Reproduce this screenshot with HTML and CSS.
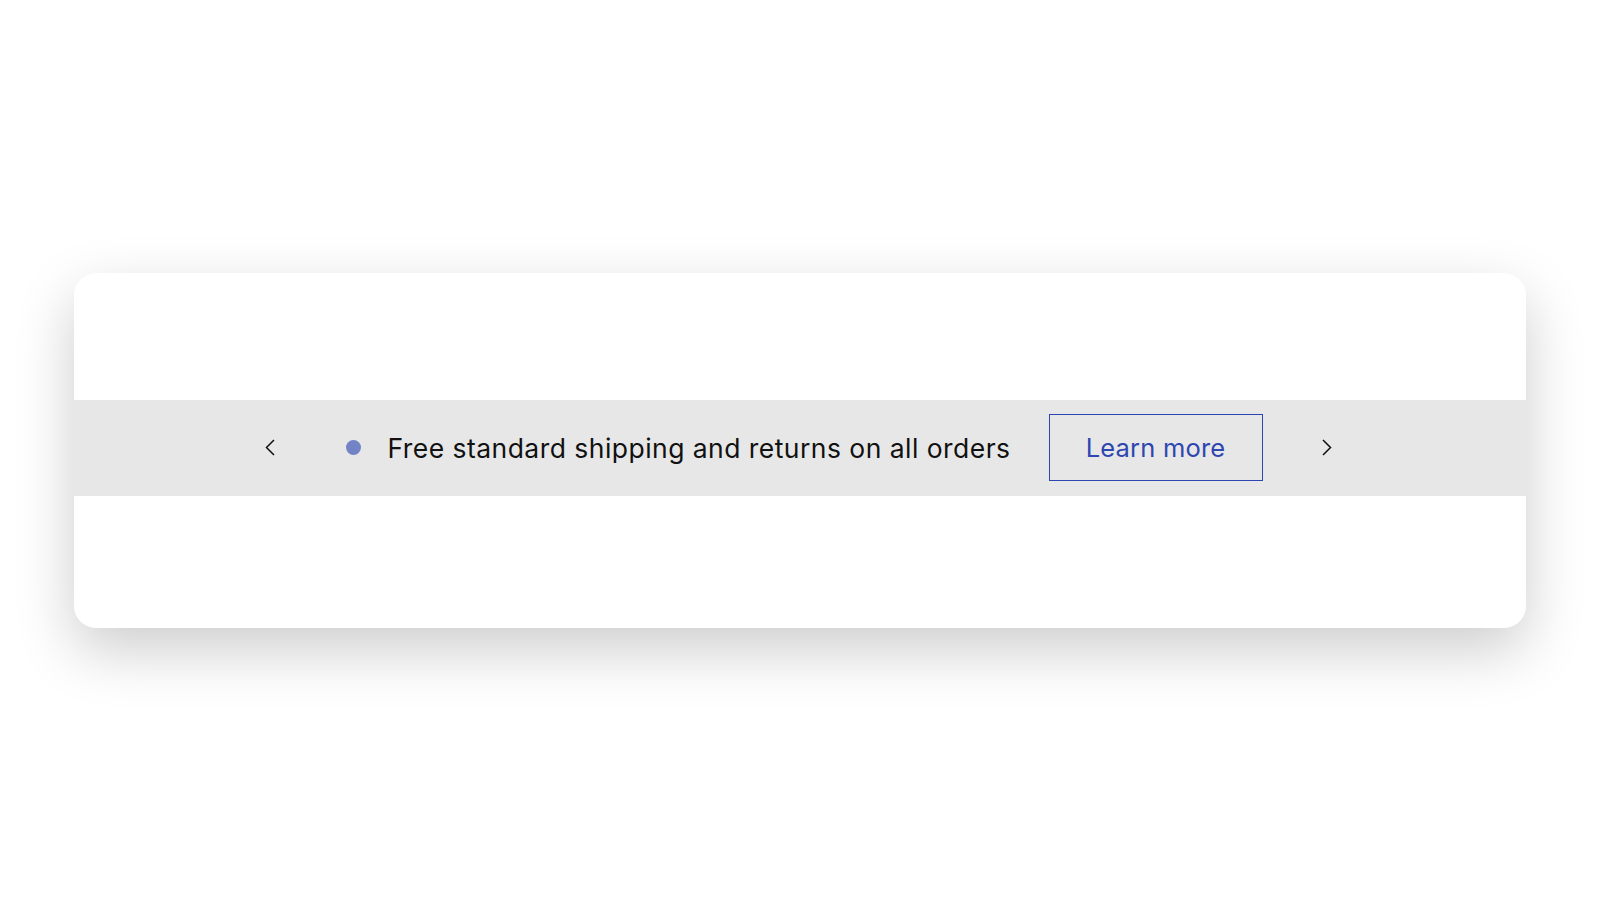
FILE: index.html
```html
<!DOCTYPE html>
<html lang="en">
<head>
<meta charset="utf-8">
<title>Announcement bar</title>
<link rel="stylesheet" href="styles.css">
</head>
<body>
<div class="card">
  <div class="bar">
    <button class="nav nav-prev" aria-label="Previous">
      <svg width="10" height="17" viewBox="0 0 10 17"><polyline points="9,1 1.5,8.5 9,16" fill="none" stroke="#111" stroke-width="1.5"/></svg>
    </button>
    <span class="dot"></span>
    <span class="message">Free standard shipping and returns on all orders</span>
    <a class="cta" href="#">Learn more</a>
    <button class="nav nav-next" aria-label="Next">
      <svg width="10" height="17" viewBox="0 0 10 17"><polyline points="1,1 8.5,8.5 1,16" fill="none" stroke="#111" stroke-width="1.5"/></svg>
    </button>
  </div>
</div>
</body>
</html>
```

FILE: styles.css
```css
html, body {
  margin: 0;
  padding: 0;
  background: #fff;
}
body {
  height: 900px;
  display: flex;
  align-items: center;
  justify-content: center;
  font-family: Inter, "Noto Sans", sans-serif;
}
.card {
  width: 1452px;
  box-sizing: border-box;
  padding: 127px 0 132px;
  background: #fff;
  border-radius: 22px;
  box-shadow: 0 22px 60px rgba(0, 0, 0, 0.2);
}
.bar {
  height: 96px;
  padding-right: 3px;
  background: #e7e7e7;
  display: flex;
  align-items: center;
  justify-content: center;
}
.nav {
  border: 0;
  background: none;
  padding: 0;
  display: flex;
  align-items: center;
  cursor: pointer;
}
.nav-prev { margin-right: 71px; }
.nav-next { margin-left: 59px; }
.dot {
  width: 15px;
  height: 15px;
  border-radius: 50%;
  background: #7284c6;
  margin-right: 26px;
}
.message {
  font-size: 26.5px;
  color: #111;
  letter-spacing: 0.46px;
  margin-right: 38px;
}
.cta {
  width: 214px;
  height: 67px;
  box-sizing: border-box;
  border: 1.5px solid #2e46b0;
  color: #2e46b0;
  font-size: 25.5px;
  letter-spacing: 0.2px;
  text-decoration: none;
  display: flex;
  align-items: center;
  justify-content: center;
}
```
